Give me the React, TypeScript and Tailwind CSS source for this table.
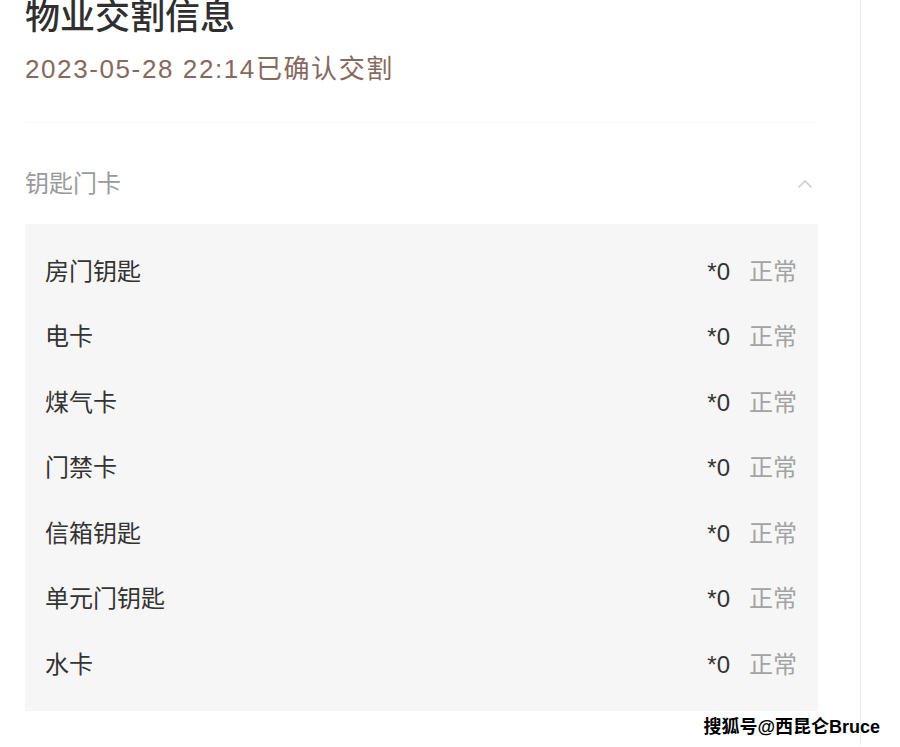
const items = ['房门钥匙', '电卡', '煤气卡', '门禁卡', '信箱钥匙', '单元门钥匙', '水卡'];

const font = { fontFamily: '"Liberation Sans", "Noto Sans CJK SC", sans-serif' };

export default function App() {
  return (
    <div className="relative h-[747px] w-[900px] overflow-hidden bg-white text-[#333]" style={font}>
      <div className="h-full w-[861px] border-r border-[#ececec] pl-[25px] pr-[42px]">
        {/* header */}
        <div className="h-[125px] border-b border-[#f7f7f7]">
          <h1 className="mt-[-2px] text-[35px] leading-[38px] font-medium text-[#2f2f2f]">物业交割信息</h1>
          <p className="mt-[17px] text-[26px] leading-[32px] tracking-[1.6px] text-[#86695e]">2023-05-28 22:14已确认交割</p>
        </div>

        {/* section */}
        <div className="flex items-center justify-between pt-[49px] pb-[28px]">
          <span className="text-[24px] leading-[24px] text-[#9a9a9a]">钥匙门卡</span>
          <svg width="16" height="10" viewBox="0 0 16 10" className="mr-[5px]">
            <path d="M1.5 8.5 L8 2 L14.5 8.5" fill="none" stroke="#cfcfcf" strokeWidth="1.6" />
          </svg>
        </div>

        <div className="bg-[#f6f6f6] pt-[15px] pb-[13px]">
          {items.map((name) => (
            <div key={name} className="flex h-[65.5px] items-center justify-between pl-[20px] pr-[21px]">
              <span className="text-[24px] text-[#333]">{name}</span>
              <div className="flex items-center gap-[19px]">
                <span className="text-[24px] text-[#333]">*0</span>
                <span className="text-[24px] text-[#a3a3a3]">正常</span>
              </div>
            </div>
          ))}
        </div>
      </div>

      {/* watermark */}
      <div
        className="absolute right-[20px] bottom-[8px] text-[18px] leading-[24px] font-bold text-black"
        style={{ textShadow: '0 0 2px #fff, 0 0 2px #fff' }}
      >
        搜狐号@西昆仑Bruce
      </div>
    </div>
  );
}
